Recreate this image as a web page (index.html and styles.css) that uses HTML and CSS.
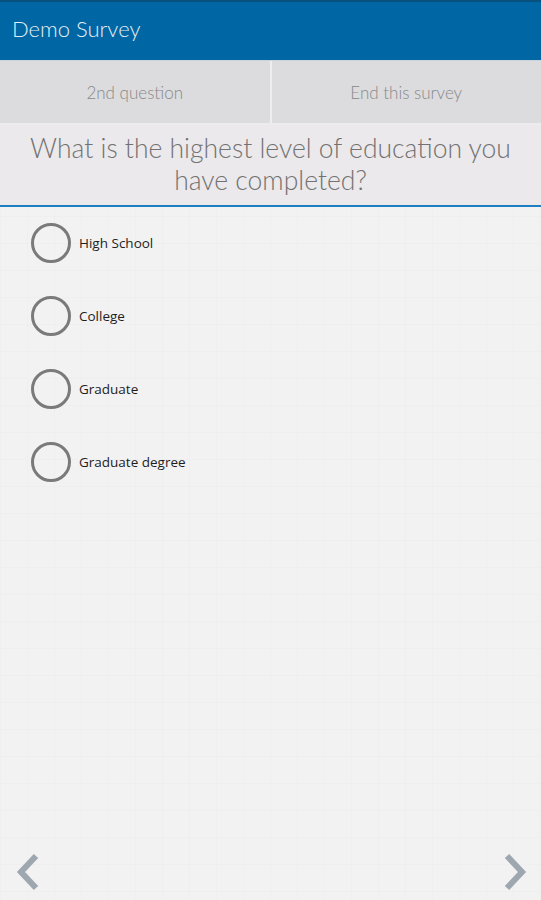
FILE: index.html
```html
<!DOCTYPE html>
<html lang="en">
  <head>
    <title>Demo Survey</title>
    <meta charset="utf-8">
    <link rel="stylesheet" href="styles.css">
  </head>
  <body>

  <div id="app">
    <div id="header">Demo Survey</div>

    <div id="tabs">
      <span class="tab">2nd question</span>
      <span class="tab">End this survey</span>
    </div>

    <div id="question">
      What is the highest level of education you have completed?
    </div>

    <ul id="options">
      <li class="option"><span class="radio"></span>High School</li>
      <li class="option"><span class="radio"></span>College</li>
      <li class="option"><span class="radio"></span>Graduate</li>
      <li class="option"><span class="radio"></span>Graduate degree</li>
    </ul>

    <div id="nav">
      <svg class="arrow" width="26" height="40" viewBox="0 0 26 40">
        <path d="M22 4 L7 20 L22 36" fill="none" stroke="#9ea7b0" stroke-width="6" stroke-linejoin="miter"/>
      </svg>
      <svg class="arrow" width="26" height="40" viewBox="0 0 26 40">
        <path d="M4 4 L19 20 L4 36" fill="none" stroke="#9ea7b0" stroke-width="6" stroke-linejoin="miter"/>
      </svg>
    </div>
  </div>

  </body>
</html>
```

FILE: styles.css
```css
html {
  height: 100%;
}
body {
  margin: 0;
  padding: 0;
  height: 100%;
  background: #f2f2f2;
  font-family: Lato, sans-serif;
}

#app {
  height: 900px;
  display: flex;
  flex-direction: column;
  background-color: #f2f2f2;
  background-image:
    linear-gradient(rgba(0,0,0,0.01) 1px, transparent 1px),
    linear-gradient(90deg, rgba(0,0,0,0.01) 1px, transparent 1px);
  background-size: 27px 27px;
}

#header {
  height: 58px;
  border-top: 2px solid #08507d;
  background: #0067a4;
  color: #e4eef5;
  font-weight: 300;
  font-size: 22px;
  line-height: 54px;
  padding-left: 12px;
}

#tabs {
  display: flex;
  height: 62px;
  border-top: 1px solid #c9d4dc;
  border-bottom: 2px solid #ececee;
}

.tab {
  flex: 1;
  background: #dcdcde;
  color: #88888a;
  font-weight: 300;
  font-size: 17px;
  text-align: center;
  line-height: 64px;
}
.tab + .tab {
  border-left: 2px solid #eeeef0;
}

#question {
  background: #ebe9eb;
  color: #727272;
  font-weight: 300;
  font-size: 26.5px;
  line-height: 32px;
  text-align: center;
  padding: 7px 16px 9px;
  border-bottom: 2px solid #1d7fc1;
}

#options {
  list-style: none;
  margin: 0;
  padding: 14px 0 0 31px;
  flex: 1;
}

.option {
  display: flex;
  align-items: center;
  height: 43px;
  margin-bottom: 30px;
  font-family: "Open Sans", "DejaVu Sans", sans-serif;
  font-size: 13.5px;
  color: #1e1e1e;
}

.radio {
  box-sizing: border-box;
  width: 40px;
  height: 40px;
  border: 3px solid #7a7a7a;
  border-radius: 50%;
  margin-right: 8px;
}

#nav {
  display: flex;
  justify-content: space-between;
  padding: 0 12px 8px 14px;
}
```
